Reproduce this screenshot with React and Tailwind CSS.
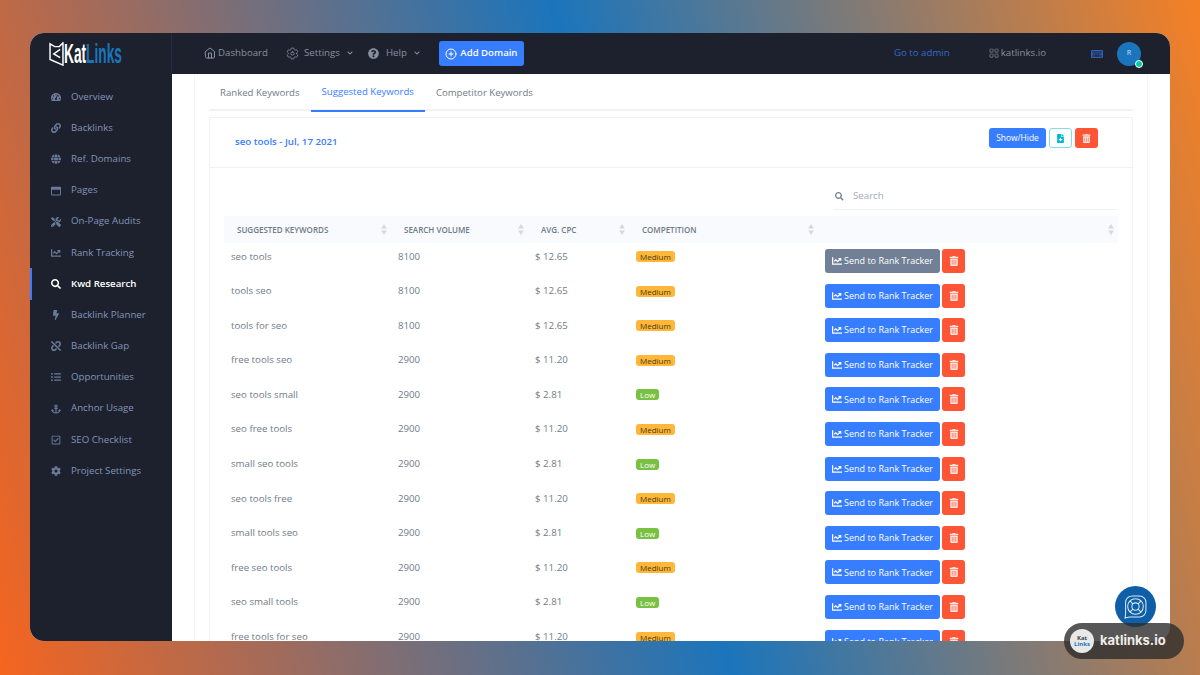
import { FaTachometerAlt, FaLink, FaGlobe, FaRegWindowMaximize, FaTools, FaChartLine, FaSearch, FaBolt, FaUnlink, FaListUl, FaAnchor, FaRegCheckSquare, FaCog, FaQuestionCircle, FaTrashAlt, FaFileMedical, FaKeyboard, FaChevronDown } from "react-icons/fa";
import { FiHome, FiPlusCircle } from "react-icons/fi";
import { BsGrid } from "react-icons/bs";
import { IoSettingsOutline } from "react-icons/io5";

const NAV = [
  { label: "Overview", icon: FaTachometerAlt },
  { label: "Backlinks", icon: FaLink },
  { label: "Ref. Domains", icon: FaGlobe },
  { label: "Pages", icon: FaRegWindowMaximize },
  { label: "On-Page Audits", icon: FaTools },
  { label: "Rank Tracking", icon: FaChartLine },
  { label: "Kwd Research", icon: FaSearch, active: true },
  { label: "Backlink Planner", icon: FaBolt },
  { label: "Backlink Gap", icon: FaUnlink },
  { label: "Opportunities", icon: FaListUl },
  { label: "Anchor Usage", icon: FaAnchor },
  { label: "SEO Checklist", icon: FaRegCheckSquare },
  { label: "Project Settings", icon: FaCog },
];

const ROWS = [
  ["seo tools", "8100", "$ 12.65", "Medium"],
  ["tools seo", "8100", "$ 12.65", "Medium"],
  ["tools for seo", "8100", "$ 12.65", "Medium"],
  ["free tools seo", "2900", "$ 11.20", "Medium"],
  ["seo tools small", "2900", "$ 2.81", "Low"],
  ["seo free tools", "2900", "$ 11.20", "Medium"],
  ["small seo tools", "2900", "$ 2.81", "Low"],
  ["seo tools free", "2900", "$ 11.20", "Medium"],
  ["small tools seo", "2900", "$ 2.81", "Low"],
  ["free seo tools", "2900", "$ 11.20", "Medium"],
  ["seo small tools", "2900", "$ 2.81", "Low"],
  ["free tools for seo", "2900", "$ 11.20", "Medium"],
];

const COLUMNS = [
  { label: "Suggested Keywords", width: "w-[167px]" },
  { label: "Search Volume", width: "w-[137px]" },
  { label: "Avg. CPC", width: "w-[101px]" },
  { label: "Competition", width: "w-[189px]" },
  { label: "", width: "w-[300px]" },
];

function SortArrows() {
  return (
    <svg viewBox="0 0 6 12" className="absolute right-[4px] top-[8px] h-[11px] w-[6px] fill-[#d3d7de]">
      <path d="M3 0l3 5H0z" />
      <path d="M3 12L0 7h6z" />
    </svg>
  );
}

function Logo() {
  return (
    <div className="flex h-[41px] w-[142px] shrink-0 items-center border-r border-[#232b45] pl-[19px]">
      <svg viewBox="0 0 16 26" className="h-[24px] w-[15px] shrink-0" fill="none" stroke="#fff" strokeWidth="1.6">
        <path d="M1 2l5 3h5l4-4v24L1 19z" />
        <path d="M12 8l-7 5 7 4" />
      </svg>
      <div className="w-[56px] origin-left scale-x-[0.49] whitespace-nowrap text-[28px] font-bold leading-none font-['Liberation_Sans',sans-serif]">
        <span className="text-white">Kat</span>
        <span className="text-[#1b75bc]">Links</span>
      </div>
    </div>
  );
}

function TopBar() {
  return (
    <div className="flex h-[41px] shrink-0 items-center bg-[#1c212d] text-[9.7px] text-[#87909f]">
      <Logo />
      <div className="ml-[32px] flex items-center gap-[2px]">
        <FiHome className="text-[12px]" />
        <span>Dashboard</span>
      </div>
      <div className="ml-[18px] flex items-center">
        <IoSettingsOutline className="text-[13px]" />
        <span className="ml-[5px]">Settings</span>
        <FaChevronDown className="ml-[7px] text-[6px]" />
      </div>
      <div className="ml-[15px] flex items-center">
        <FaQuestionCircle className="text-[11px]" />
        <span className="ml-[7px]">Help</span>
        <FaChevronDown className="ml-[7px] text-[6px]" />
      </div>
      <button className="ml-[19px] flex h-[25px] w-[85px] items-center justify-center gap-[3px] rounded-[3px] bg-[#377dff] text-[9.6px] font-semibold text-white">
        <FiPlusCircle className="text-[12px]" />
        Add Domain
      </button>
      <span className="ml-[370px] text-[#3568c8]">Go to admin</span>
      <div className="ml-[39px] flex items-center gap-[2px]">
        <BsGrid className="text-[10px]" />
        <span>katlinks.io</span>
      </div>
      <FaKeyboard className="ml-[45px] text-[12px] text-[#2f5fb5]" />
      <div className="relative ml-[14px] flex h-[24px] w-[24px] items-center justify-center rounded-full bg-[#1b75bc] text-[7px] font-semibold text-[#a9c7e4]">
        R
        <span className="absolute bottom-[-2px] right-[-2px] h-[8px] w-[8px] rounded-full border border-white bg-[#00c9a7]" />
      </div>
    </div>
  );
}

function Sidebar() {
  return (
    <aside className="flex w-[142px] shrink-0 flex-col bg-[#1c212d] pt-[7.5px]">
      {NAV.map((item) => (
        <div
          key={item.label}
          className={`flex h-[31.17px] items-center border-l-2 pl-[19px] text-[9.7px] ${item.active ? "border-[#377dff] font-semibold text-white" : "border-transparent text-[#8494b8]"}`}
        >
          <span className={`flex w-[20px] justify-start text-[10px] ${item.active ? "text-white" : "text-[#6b7a99]"}`}>
            <item.icon />
          </span>
          {item.label}
        </div>
      ))}
    </aside>
  );
}

function Badge({ level }) {
  const tone = level === "Low" ? "bg-[#7ac143] text-white" : "bg-[#ffb73a] text-[#4a3a10]";
  return <span className={`inline-block rounded-[3px] px-[4px] text-[8px] font-medium leading-[11px] ${tone}`}>{level}</span>;
}

function KeywordRow({ row, index }) {
  return (
    <tr className="h-[34.6px] align-top text-[9.7px] text-[#6f7b87]">
      <td className="pl-[7px] pt-[6.5px]">{row[0]}</td>
      <td className="pl-[7px] pt-[6.5px]">{row[1]}</td>
      <td className="pl-[7px] pt-[6.5px]">{row[2]}</td>
      <td className="pl-[7px] pt-[7px]"><Badge level={row[3]} /></td>
      <td className="pl-[7px] pt-[6px]">
        <div className="flex gap-[2px]">
          <button className={`flex h-[24px] w-[115px] items-center justify-center gap-[2px] rounded-[3px] text-[9px] text-white ${index === 0 ? "bg-[#718096]" : "bg-[#377dff]"}`}>
            <FaChartLine className="text-[10px]" />
            Send to Rank Tracker
          </button>
          <button className="flex h-[24px] w-[23px] items-center justify-center rounded-[3px] bg-[#fd5535] text-[10px] text-white">
            <FaTrashAlt className="opacity-85" />
          </button>
        </div>
      </td>
    </tr>
  );
}

function KeywordCard() {
  return (
    <div className="border border-[#f0f2f7]">
      <div className="flex h-[50px] items-start justify-between border-b border-[#f0f2f7] pl-[25px] pr-[34px]">
        <span className="mt-[17px] text-[9.7px] font-semibold text-[#377dff]">seo tools - Jul, 17 2021</span>
        <div className="mt-[10px] flex gap-[3px]">
          <button className="h-[20px] w-[57px] rounded-[3px] bg-[#377dff] text-[8.4px] font-medium text-white">Show/Hide</button>
          <button className="flex h-[20px] w-[23px] items-center justify-center rounded-[3px] border border-[#7fdfe8] text-[9px] text-[#00b8d4]">
            <FaFileMedical />
          </button>
          <button className="flex h-[20px] w-[23px] items-center justify-center rounded-[3px] bg-[#fd5535] text-[9px] text-white">
            <FaTrashAlt className="opacity-85" />
          </button>
        </div>
      </div>
      <div className="px-[14px]">
        <div className="flex justify-end pt-[16px]">
          <div className="flex h-[26px] w-[285px] items-center border-b border-[#eef0f5] pl-[2px] text-[9.7px] text-[#a3abb8]">
            <FaSearch className="text-[8.5px] text-[#77838f]" />
            <span className="ml-[9.5px]">Search</span>
          </div>
        </div>
        <table className="mt-[6px] w-[894px] table-fixed border-collapse">
          <thead>
            <tr className="h-[27px] bg-[#f8fafd]">
              {COLUMNS.map((col) => (
                <th key={col.label} className={`relative pl-[13px] text-left text-[8px] font-semibold uppercase text-[#6f7b87] ${col.width}`}>
                  {col.label}
                  <SortArrows />
                </th>
              ))}
            </tr>
          </thead>
          <tbody>
            {ROWS.map((row, i) => (
              <KeywordRow key={row[0]} row={row} index={i} />
            ))}
          </tbody>
        </table>
      </div>
    </div>
  );
}

function Tabs() {
  const tabs = ["Ranked Keywords", "Suggested Keywords", "Competitor Keywords"];
  return (
    <div className="flex h-[37px] border-b-2 border-[#f0f2f8] text-[9.6px] text-[#6f7b87]">
      {tabs.map((t, i) => (
        <div key={t} className={`flex h-[38px] items-center px-[11px] ${i === 1 ? "border-b-2 border-[#377dff] text-[#377dff]" : ""}`}>
          {t}
        </div>
      ))}
    </div>
  );
}

export default function App() {
  return (
    <div className="relative h-[675px] w-[1200px] overflow-hidden bg-[linear-gradient(75deg,#f5651f_0%,#1b75bc_53%,#f58025_100%)] px-[30px] pt-[33px] font-['Open_Sans','Noto_Sans',sans-serif]">
      <div className="flex h-[608px] flex-col overflow-hidden rounded-[14px] bg-white">
        <TopBar />
        <div className="flex min-h-0 flex-1">
          <Sidebar />
          <main className="min-w-0 flex-1 overflow-hidden">
            <div className="ml-[22px] w-[954px] border-x border-[#f4f6fb] px-[14px]">
              <Tabs />
              <div className="mt-[6px]">
                <KeywordCard />
              </div>
            </div>
          </main>
        </div>
      </div>

      <div className="absolute left-[1115px] top-[586px] flex h-[41px] w-[41px] items-center justify-center rounded-full bg-[#0e5ea8]">
        <svg viewBox="0 0 24 24" className="h-[25px] w-[25px]" fill="none" stroke="#dbe8f5" strokeWidth="1">
          <path d="M8 2h8a6 6 0 0 1 6 6v8a6 6 0 0 1-6 6H6l-4 1 .5-4V8a6 6 0 0 1 6-6z" />
          <circle cx="12" cy="12" r="7.5" />
          <circle cx="12" cy="12" r="3.5" />
          <path d="M6.7 6.7l2.8 2.8M17.3 6.7l-2.8 2.8M6.7 17.3l2.8-2.8M17.3 17.3l-2.8-2.8" />
        </svg>
      </div>

      <div className="absolute left-[1064px] top-[623px] flex h-[36px] w-[120px] items-center rounded-full bg-[#2d2d2d]/80 pl-[6px]">
        <div className="flex h-[24px] w-[24px] flex-col items-center justify-center rounded-full bg-[#e8e8e8] text-[6px] font-bold leading-[6px]">
          <span className="text-[#444]">Kat</span>
          <span className="text-[#1b75bc]">Links</span>
        </div>
        <span className="ml-[6px] text-[13px] font-bold text-[#f0ece8] font-['Inter',sans-serif]">katlinks.io</span>
      </div>
    </div>
  );
}
